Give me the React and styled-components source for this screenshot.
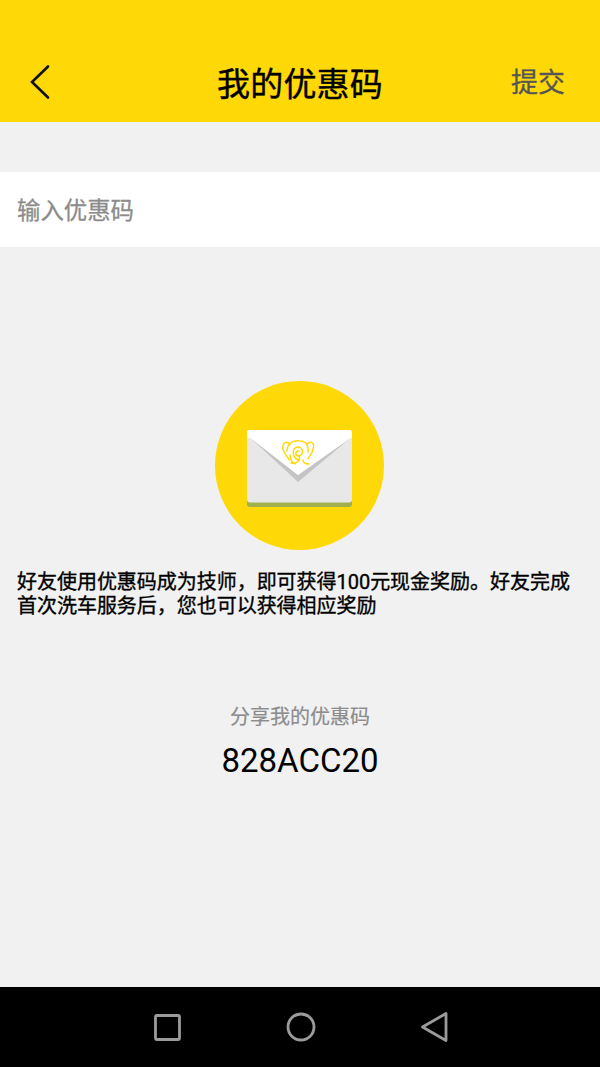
import React from 'react'
import styled, { createGlobalStyle } from 'styled-components'

const Global = createGlobalStyle`
  html, body { margin: 0; padding: 0; background: #f1f1f1; }
  * { box-sizing: border-box; }
`
const cjk = `Roboto, "Noto Sans CJK SC", sans-serif`

const Page = styled.div`
  width: 600px;
  height: 1067px;
  display: flex;
  flex-direction: column;
  overflow: hidden;
  font-family: ${cjk};
  background: #f1f1f1;
`
const Header = styled.header`
  height: 122px;
  flex: none;
  background: #ffd808;
  padding: 40px 35px 0;
  display: grid;
  grid-template-columns: 1fr auto 1fr;
  align-items: center;
`
const BackButton = styled.div`
  display: flex;
  margin: 2px 0 0 -6px;
`
const Title = styled.h1`
  margin: 8px 0 0;
  font-size: 33px;
  letter-spacing: 0.2px;
  font-weight: 400;
  -webkit-text-stroke: 0.4px #000;
  color: #000;
  line-height: 44px;
`
const Submit = styled.span`
  justify-self: end;
  font-size: 27px;
  -webkit-text-stroke: 0.3px #555;
  color: #555;
  line-height: 40px;
  margin-top: 4px;
`
const InputRow = styled.div`
  margin-top: 50px;
  height: 75px;
  background: #fff;
  padding: 2px 17px 0;
  display: flex;
  align-items: center;
`
const CodeInput = styled.input`
  width: 100%;
  border: 0;
  outline: 0;
  background: none;
  padding: 0;
  font-family: inherit;
  font-size: 23.4px;
  color: #888;
  -webkit-text-stroke: 0.3px #8c8c8c;
  &::placeholder { color: #8c8c8c; opacity: 1; }
`
const Main = styled.main`
  flex: 1;
  display: flex;
  flex-direction: column;
  align-items: center;
`
const Badge = styled.div`
  margin: 134px 2px 0 0;
  width: 169px;
  height: 169px;
  padding-top: 6px;
  border-radius: 50%;
  background: #ffd808;
  display: flex;
  align-items: center;
  justify-content: center;
`
const Notice = styled.p`
  align-self: stretch;
  margin: 20px 0 0;
  padding: 0 17px;
  font-size: 20px;
  line-height: 24px;
  letter-spacing: -0.03px;
  -webkit-text-stroke: 0.35px #000;
  color: #000;
`
const ShareLabel = styled.div`
  margin-top: 87px;
  font-size: 20px;
  line-height: 24px;
  -webkit-text-stroke: 0.2px #8c8c8c;
  color: #8c8c8c;
`
const ShareCode = styled.div`
  margin-top: 10px;
  font-size: 33px;
  line-height: 44px;
  color: #000;
`
const NavBar = styled.nav`
  height: 80px;
  flex: none;
  background: #000;
  padding: 0 152px 0 154px;
  display: flex;
  align-items: center;
  justify-content: space-between;
`

const BackIcon = () => (
  <svg width="22" height="36" viewBox="0 0 22 36" fill="none">
    <path d="M19 2.5 L3 18 L19 33.5" stroke="#111" strokeWidth="2.6" strokeLinecap="round" strokeLinejoin="miter" />
  </svg>
)

const Envelope = () => (
  <svg width="107" height="79" viewBox="0 0 107 79">
    <rect x="1" y="4" width="105" height="74" rx="3" fill="#9fb04f" />
    <rect x="1" y="1" width="105" height="72.5" rx="3" fill="#e8e8e8" />
    <path d="M4.5 9 L52 53 L104.5 9 L52 46 Z" fill="#c4c4c4" />
    <path d="M1 4 Q1 1 4 1 H103 Q106 1 106 4 V9 H104.5 L52 46 L4.5 9 H1 Z" fill="#fff" />
    <g fill="none" stroke="#ffd808" strokeWidth="1.5" strokeLinecap="round" transform="translate(0 2)">
      <path d="M44 13 C39 9 36 13 37 18 C38 23 41 24 43 29" strokeDasharray="4 1" />
      <path d="M61 13 C66 9 69 13 67 18 C66 23 64 24 62 28" strokeDasharray="4 1" />
      <path d="M41 20 C41 12 48 9 54 10 C60 10 63 15 62 21" strokeDasharray="5 1.2" />
      <path d="M53 29 C46 27 45 17 52 16 C58 16 58 25 52 25 C49 24 49 20 53 20" />
      <path d="M53 25 C55 30 50 33 45 32 M44 24 C44 29 46 31 49 33 M57 29 C57 32 60 33 63 33" />
    </g>
  </svg>
)

const SquareIcon = () => (
  <svg width="27" height="27" viewBox="0 0 27 27" fill="none">
    <rect x="1.5" y="1.5" width="24" height="24" rx="1.5" stroke="#9b9b9b" strokeWidth="2.8" />
  </svg>
)
const CircleIcon = () => (
  <svg width="30" height="30" viewBox="0 0 30 30" fill="none">
    <circle cx="15" cy="15" r="13" stroke="#9b9b9b" strokeWidth="2.8" />
  </svg>
)
const TriangleIcon = () => (
  <svg width="27" height="32" viewBox="0 0 27 32" fill="none">
    <path d="M25 2.5 V29.5 L1.5 16 Z" stroke="#9b9b9b" strokeWidth="2.8" strokeLinejoin="round" />
  </svg>
)

export default function App() {
  return (
    <Page>
      <Global />
      <Header>
        <BackButton>
          <BackIcon />
        </BackButton>
        <Title>我的优惠码</Title>
        <Submit>提交</Submit>
      </Header>
      <InputRow>
        <CodeInput placeholder="输入优惠码" />
      </InputRow>
      <Main>
        <Badge>
          <Envelope />
        </Badge>
        <Notice>好友使用优惠码成为技师，即可获得100元现金奖励。好友完成首次洗车服务后，您也可以获得相应奖励</Notice>
        <ShareLabel>分享我的优惠码</ShareLabel>
        <ShareCode>828ACC20</ShareCode>
      </Main>
      <NavBar>
        <SquareIcon />
        <CircleIcon />
        <TriangleIcon />
      </NavBar>
    </Page>
  )
}
